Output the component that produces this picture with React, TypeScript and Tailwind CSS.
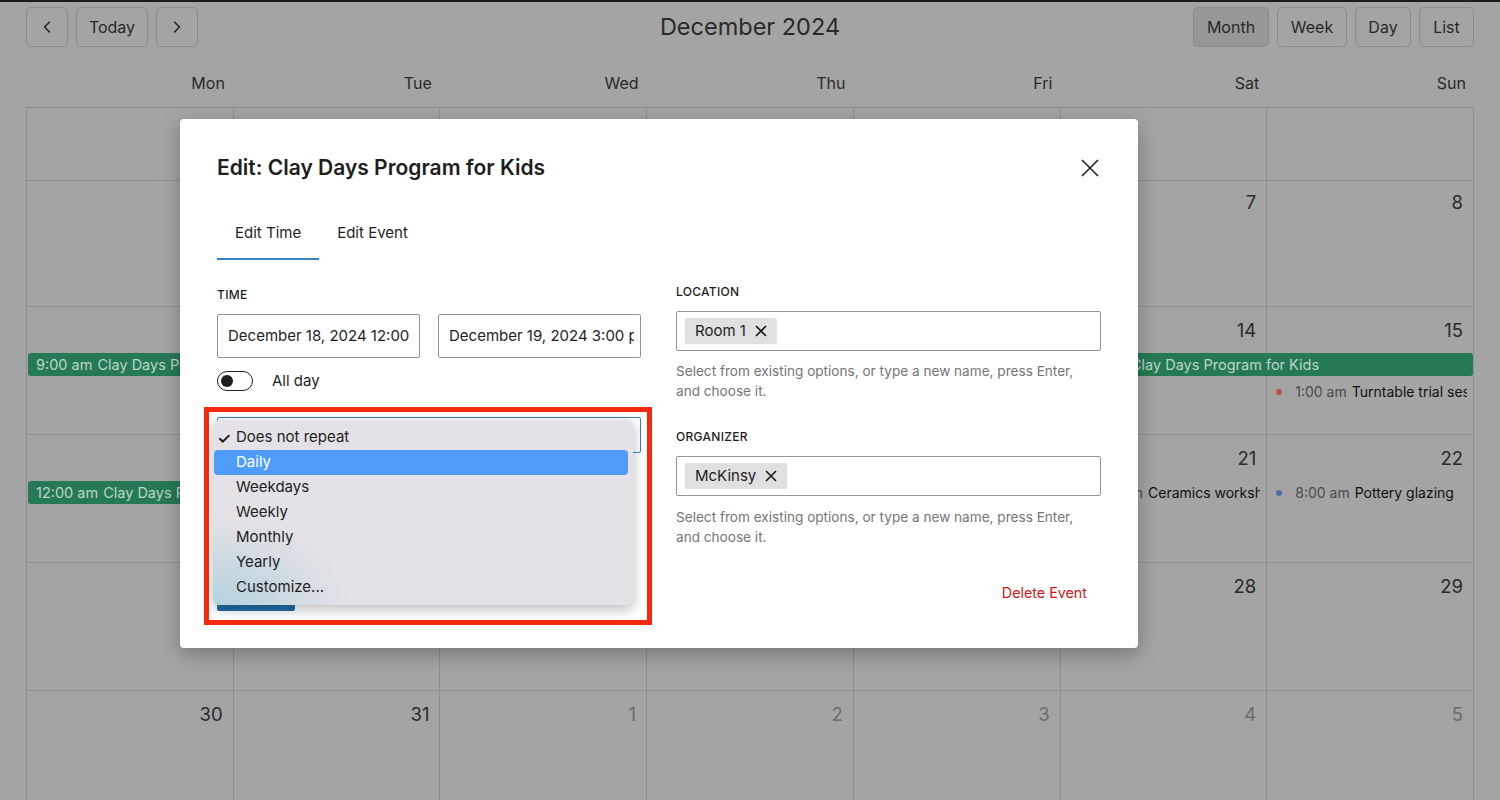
import React from "react";
import { ChevronLeft, ChevronRight } from "lucide-react";

type Ev = {
  col: number;
  span: number;
  row: 2 | 3;
  kind: "bar" | "dot";
  time: string;
  title: string;
  dot?: string;
};

type Week = {
  h: string;
  dates: { n: number; other?: boolean }[] | null;
  events: Ev[];
};

const COL_START = ["col-start-1", "col-start-2", "col-start-3", "col-start-4", "col-start-5", "col-start-6", "col-start-7"];
const COL_SPAN = ["col-span-1", "col-span-2", "col-span-3", "col-span-4", "col-span-5", "col-span-6", "col-span-7"];
const ROW_START: Record<number, string> = { 2: "row-start-2", 3: "row-start-3" };

const weeks: Week[] = [
  { h: "h-[71px]", dates: null, events: [] },
  {
    h: "h-[128px]",
    dates: [2, 3, 4, 5, 6, 7, 8].map((n) => ({ n })),
    events: [],
  },
  {
    h: "h-[128px]",
    dates: [9, 10, 11, 12, 13, 14, 15].map((n) => ({ n })),
    events: [
      { col: 1, span: 3, row: 2, kind: "bar", time: "9:00 am", title: "Clay Days Program for Kids" },
      { col: 6, span: 2, row: 2, kind: "bar", time: "9:00 am", title: "Clay Days Program for Kids" },
      { col: 7, span: 1, row: 3, kind: "dot", time: "1:00 am", title: "Turntable trial session", dot: "bg-[#b9534a]" },
    ],
  },
  {
    h: "h-[128px]",
    dates: [16, 17, 18, 19, 20, 21, 22].map((n) => ({ n })),
    events: [
      { col: 1, span: 3, row: 2, kind: "bar", time: "12:00 am", title: "Clay Days Program for Kids" },
      { col: 6, span: 1, row: 2, kind: "dot", time: "9:00 am", title: "Ceramics workshop", dot: "bg-[#4f6aa8]" },
      { col: 7, span: 1, row: 2, kind: "dot", time: "8:00 am", title: "Pottery glazing", dot: "bg-[#4f6aa8]" },
    ],
  },
  {
    h: "h-[128px]",
    dates: [23, 24, 25, 26, 27, 28, 29].map((n) => ({ n })),
    events: [],
  },
  {
    h: "h-[128px]",
    dates: [
      { n: 30 },
      { n: 31 },
      { n: 1, other: true },
      { n: 2, other: true },
      { n: 3, other: true },
      { n: 4, other: true },
      { n: 5, other: true },
    ],
    events: [],
  },
];

function WeekRow({ w }: { w: Week }) {
  return (
    <div className={`grid grid-cols-7 grid-rows-[46px_27px_1fr] ${w.h}`}>
      {COL_START.map((c, i) => (
        <div key={"bg" + i} className={`${c} row-start-1 row-end-4 border-r border-b border-[#8f8f8f]`} />
      ))}
      {w.dates &&
        w.dates.map((d, i) => (
          <div
            key={"d" + i}
            className={`${COL_START[i]} row-start-1 justify-self-end pt-[11px] pr-[11px] text-[18.5px] leading-[24px] ${
              d.other ? "text-[#6c6c6c]" : "text-[#2a2a2a]"
            }`}
          >
            {d.n}
          </div>
        ))}
      {w.events.map((e, i) =>
        e.kind === "bar" ? (
          <div
            key={"e" + i}
            className={`${COL_START[e.col - 1]} ${COL_SPAN[e.span - 1]} ${ROW_START[e.row]} self-start ml-[1px] mr-[1px] h-[23px] rounded-[3px] bg-[#267a53] px-[8px] text-[14.5px] leading-[23px] text-[#bcd4c7] whitespace-nowrap overflow-hidden`}
          >
            <span className="mr-[5px]">{e.time}</span>
            <span>{e.title}</span>
          </div>
        ) : (
          <div
            key={"e" + i}
            className={`${COL_START[e.col - 1]} ${COL_SPAN[e.span - 1]} ${ROW_START[e.row]} self-start min-w-0 pl-[9px] pr-[7px]`}
          >
            <div className="flex items-center h-[23px] text-[14px] whitespace-nowrap overflow-hidden">
              <span className={`inline-block w-[6px] h-[6px] rounded-full shrink-0 mr-[13px] ${e.dot}`} />
              <span className="text-[#4b4b4b] mr-[5px] shrink-0">{e.time}</span>
              <span className="text-[#111111] shrink-0">{e.title}</span>
            </div>
          </div>
        )
      )}
    </div>
  );
}

function ToolBtn({ children, active, w }: { children: React.ReactNode; active?: boolean; w: string }) {
  return (
    <div
      className={`${w} h-[40px] flex items-center justify-center rounded-[5px] border border-[#8b8b8b] text-[16px] text-[#282828] ${
        active ? "bg-[#979797]" : ""
      }`}
    >
      {children}
    </div>
  );
}

function SmallX() {
  return (
    <svg width="12" height="12" viewBox="0 0 12 12" fill="none">
      <path d="M1 1 L11 11 M11 1 L1 11" stroke="#1e1e1e" strokeWidth="1.7" />
    </svg>
  );
}

const menuItems = ["Daily", "Weekdays", "Weekly", "Monthly", "Yearly", "Customize..."];

export default function App() {
  return (
    <div className="relative w-[1500px] h-[800px] overflow-hidden bg-[#a4a4a4] border-t-2 border-[#1d1d1d] font-['Inter',sans-serif]">
      {/* toolbar */}
      <div className="grid grid-cols-[1fr_auto_1fr] items-center px-[26px] pt-[5px]">
        <div className="flex gap-[8px]">
          <ToolBtn w="w-[42px]">
            <ChevronLeft size={20} strokeWidth={1.8} color="#262626" />
          </ToolBtn>
          <ToolBtn w="w-[72px]">Today</ToolBtn>
          <ToolBtn w="w-[42px]">
            <ChevronRight size={20} strokeWidth={1.8} color="#262626" />
          </ToolBtn>
        </div>
        <div className="text-[23.5px] leading-[32px] text-[#2a2a2a]">December 2024</div>
        <div className="flex gap-[8px] justify-end">
          <ToolBtn w="w-[76px]" active>
            Month
          </ToolBtn>
          <ToolBtn w="w-[70px]">Week</ToolBtn>
          <ToolBtn w="w-[56px]">Day</ToolBtn>
          <ToolBtn w="w-[55px]">List</ToolBtn>
        </div>
      </div>

      {/* day header */}
      <div className="grid grid-cols-7 mx-[26px] h-[60px]">
        {["Mon", "Tue", "Wed", "Thu", "Fri", "Sat", "Sun"].map((d) => (
          <div key={d} className="flex items-end justify-end pb-[12px] pr-[8px] text-[16px] leading-[24px] text-[#2a2a2a]">
            {d}
          </div>
        ))}
      </div>

      {/* grid */}
      <div className="mx-[26px] border-l border-t border-[#8f8f8f]">
        {weeks.map((w, i) => (
          <WeekRow key={i} w={w} />
        ))}
      </div>

      {/* dialog */}
      <div className="absolute left-[180px] top-[117px] w-[958px] h-[529px] bg-white rounded-[4px] shadow-[0_6px_20px_rgba(0,0,0,0.28)]">
        <div className="h-[98px] flex items-center justify-between pl-[37px] pr-[39px]">
          <h1 className="text-[21px] leading-[28px] font-semibold text-[#1e1e1e]">Edit: Clay Days Program for Kids</h1>
          <svg width="18" height="18" viewBox="0 0 18 18" fill="none">
            <path d="M1 1 L17 17 M17 1 L1 17" stroke="#1e1e1e" strokeWidth="1.6" />
          </svg>
        </div>

        <div className="flex pl-[37px]">
          <div className="h-[43px] px-[18px] pt-[6px] text-[15px] leading-[20px] text-[#1e1e1e] border-b-2 border-[#3582c4]">Edit Time</div>
          <div className="h-[43px] px-[18px] pt-[6px] text-[15px] leading-[20px] text-[#1e1e1e] border-b-2 border-transparent">Edit Event</div>
        </div>

        <div className="flex gap-[35px] pl-[37px] pr-[37px] pt-[24px]">
          {/* left */}
          <div className="w-[424px] pt-[3px]">
            <div className="text-[12px] leading-[16px] font-medium tracking-[0.3px] text-[#1e1e1e] uppercase">Time</div>
            <div className="mt-[11px] flex gap-[18px]">
              <div className="w-[203px] h-[44px] border border-[#949494] rounded-[2px] flex items-center pl-[10px] pr-[8px] overflow-hidden">
                <span className="whitespace-nowrap overflow-hidden text-[15px] text-[#1e1e1e]">December 18, 2024 12:00 am</span>
              </div>
              <div className="w-[203px] h-[44px] border border-[#949494] rounded-[2px] flex items-center pl-[10px] pr-[6px] overflow-hidden">
                <span className="whitespace-nowrap overflow-hidden text-[15px] text-[#1e1e1e]">December 19, 2024 3:00 pm</span>
              </div>
            </div>
            <div className="mt-[13px] flex items-center h-[20px]">
              <div className="w-[36px] h-[20px] rounded-full border-[1.5px] border-[#1e1e1e] flex items-center pl-[3px]">
                <div className="w-[12px] h-[12px] rounded-full bg-[#1e1e1e]" />
              </div>
              <span className="ml-[19px] text-[15px] text-[#1e1e1e]">All day</span>
            </div>
            <div className="relative mt-[26px] h-[36px] w-[424px] border border-[#3582c4] rounded-[2px]">
              {/* native select popup */}
              <div className="absolute left-[-5px] top-[2px] w-[420px] h-[185px] rounded-[6px] bg-[#e4e2e6] shadow-[0_4px_14px_rgba(0,0,0,0.28)] py-[5px] z-10 overflow-hidden">
                <div className="absolute left-0 bottom-0 w-[140px] h-[90px] bg-[radial-gradient(ellipse_at_bottom_left,rgba(120,190,210,0.45),rgba(228,226,230,0)_70%)]" />
                <div className="relative h-[25px] flex items-center text-[15px] text-[#1e1e1e]">
                  <span className="w-[23px] pl-[4px] text-[16px] font-semibold leading-none">✓</span>
                  <span>Does not repeat</span>
                </div>
                {menuItems.map((m) => (
                  <div
                    key={m}
                    className={`relative h-[25px] flex items-center ml-[1px] mr-[5px] rounded-[4px] pl-[22px] text-[15px] ${
                      m === "Daily" ? "bg-[#4f9cf8] text-white" : "text-[#1e1e1e]"
                    }`}
                  >
                    {m}
                  </div>
                ))}
              </div>
            </div>
            <div className="mt-[122px] w-[78px] h-[36px] rounded-[2px] bg-[#1f6fa8]" />
          </div>

          {/* right */}
          <div className="w-[425px]">
            <div className="text-[12px] leading-[16px] font-medium tracking-[0.3px] text-[#1e1e1e] uppercase">Location</div>
            <div className="mt-[11px] h-[40px] border border-[#949494] rounded-[2px] flex items-center pl-[8px]">
              <div className="h-[26px] flex items-center gap-[9px] bg-[#e0e0e0] rounded-[2px] pl-[10px] pr-[10px] text-[15px] text-[#1e1e1e]">
                <span>Room 1</span>
                <SmallX />
              </div>
            </div>
            <p className="mt-[10px] text-[13.6px] leading-[20px] text-[#757575]">
              Select from existing options, or type a new name, press Enter,
              <br />
              and choose it.
            </p>
            <div className="mt-[28px] text-[12px] leading-[16px] font-medium tracking-[0.3px] text-[#1e1e1e] uppercase">Organizer</div>
            <div className="mt-[11px] h-[40px] border border-[#949494] rounded-[2px] flex items-center pl-[8px]">
              <div className="h-[26px] flex items-center gap-[9px] bg-[#e0e0e0] rounded-[2px] pl-[10px] pr-[10px] text-[15px] text-[#1e1e1e]">
                <span>McKinsy</span>
                <SmallX />
              </div>
            </div>
            <p className="mt-[11px] text-[13.6px] leading-[20px] text-[#757575]">
              Select from existing options, or type a new name, press Enter,
              <br />
              and choose it.
            </p>
            <div className="mt-[36px] flex justify-end pr-[14px]">
              <span className="text-[14.3px] leading-[20px] text-[#cc1818]">Delete Event</span>
            </div>
          </div>
        </div>
      </div>

      {/* annotation highlight */}
      <div className="absolute left-[204px] top-[405px] w-[448px] h-[218px] border-[5px] border-[#f6290f] z-20" />
    </div>
  );
}
